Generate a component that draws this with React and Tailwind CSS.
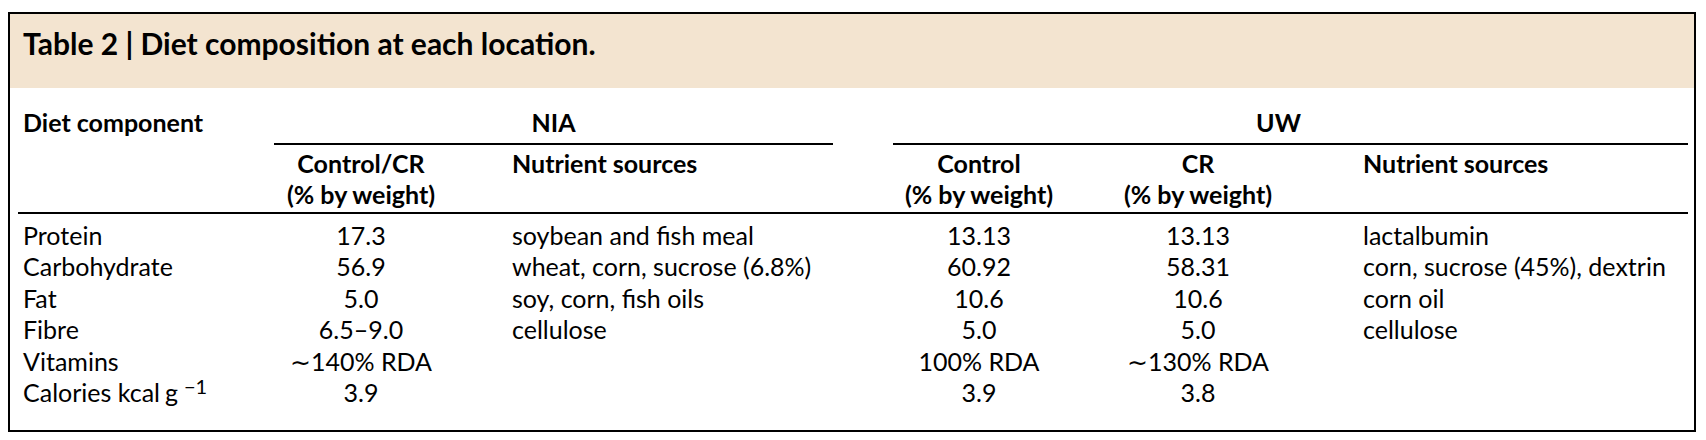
import React from "react";

const rows = [
  { label: "Protein", nia: "17.3", niaSrc: "soybean and fish meal", uc: "13.13", ucr: "13.13", uwSrc: "lactalbumin" },
  { label: "Carbohydrate", nia: "56.9", niaSrc: "wheat, corn, sucrose (6.8%)", uc: "60.92", ucr: "58.31", uwSrc: "corn, sucrose (45%), dextrin" },
  { label: "Fat", nia: "5.0", niaSrc: "soy, corn, fish oils", uc: "10.6", ucr: "10.6", uwSrc: "corn oil" },
  { label: "Fibre", nia: "6.5–9.0", niaSrc: "cellulose", uc: "5.0", ucr: "5.0", uwSrc: "cellulose" },
  { label: "Vitamins", nia: "\u223C140% RDA", niaSrc: "", uc: "100% RDA", ucr: "\u223C130% RDA", uwSrc: "" },
  { label: "cal", nia: "3.9", niaSrc: "", uc: "3.9", ucr: "3.8", uwSrc: "" },
];

export default function App() {
  return (
    <div className="bg-white w-[1706px] h-[440px] pt-[12px] pl-[8px] font-['Lato',sans-serif] text-black">
      <div className="w-[1688px] h-[420px] border-2 border-black flex flex-col">
        <div className="h-[74px] bg-[#f3e4d0] pl-[13px] pt-[11px]">
          <h1 className="text-[30px] leading-[36px] font-bold">Table 2 | Diet composition at each location.</h1>
        </div>
        <div className="px-[8px] grid grid-cols-[256px_174px_385px_60px_172px_266px_357px] text-[25px] leading-[31px]">
          {/* Row A */}
          <div className="pl-[5px] pt-[19px] pb-[5px] font-bold whitespace-nowrap">Diet component</div>
          <div className="col-span-2 pt-[19px] pb-[5px] font-bold text-center border-b-2 border-black">NIA</div>
          <div />
          <div className="col-span-3 pt-[19px] pb-[5px] pr-[24px] font-bold text-center border-b-2 border-black">UW</div>
          {/* Row B */}
          <div className="pt-[3px] pb-[2px] border-b-2 border-black" />
          <div className="pt-[3px] pb-[2px] border-b-2 border-black font-bold text-center whitespace-nowrap">Control/CR<br />(% by weight)</div>
          <div className="pt-[3px] pb-[2px] border-b-2 border-black font-bold pl-[64px] whitespace-nowrap">Nutrient sources</div>
          <div className="pt-[3px] pb-[2px] border-b-2 border-black" />
          <div className="pt-[3px] pb-[2px] border-b-2 border-black font-bold text-center whitespace-nowrap">Control<br />(% by weight)</div>
          <div className="pt-[3px] pb-[2px] border-b-2 border-black font-bold text-center whitespace-nowrap">CR<br />(% by weight)</div>
          <div className="pt-[3px] pb-[2px] border-b-2 border-black font-bold pl-[32px] whitespace-nowrap">Nutrient sources</div>
          {/* Data */}
          <div className="col-span-7 h-[6px]" />
          {rows.map((r) => (
            <React.Fragment key={r.label}>
              <div className="pl-[5px] leading-[31.4px] whitespace-nowrap">
                {r.label === "cal" ? (
                  <span>
                    Calories kcal<span className="ml-[5px]">g</span>
                    <span className="ml-[6px] inline-block align-top text-[20px] leading-[20px] relative top-[-1px]">−1</span>
                  </span>
                ) : r.label}
              </div>
              <div className="text-center leading-[31.4px] whitespace-nowrap">{r.nia}</div>
              <div className="pl-[64px] leading-[31.4px] whitespace-nowrap">{r.niaSrc}</div>
              <div />
              <div className="text-center leading-[31.4px] whitespace-nowrap">{r.uc}</div>
              <div className="text-center leading-[31.4px] whitespace-nowrap">{r.ucr}</div>
              <div className="pl-[32px] leading-[31.4px] whitespace-nowrap">{r.uwSrc}</div>
            </React.Fragment>
          ))}
        </div>
      </div>
    </div>
  );
}
